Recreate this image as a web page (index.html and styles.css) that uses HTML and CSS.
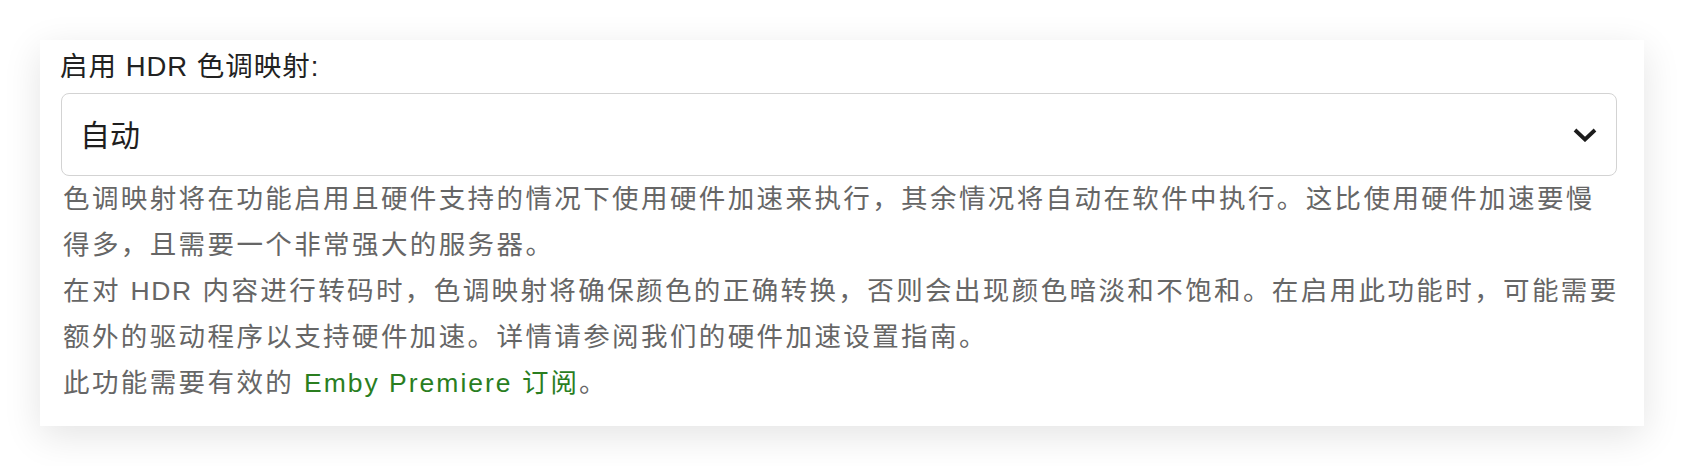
FILE: index.html
```html
<!DOCTYPE html>
<html lang="zh-CN">
<head>
<meta charset="utf-8">
<title>HDR 色调映射</title>
<link rel="stylesheet" href="styles.css">
</head>
<body>
<div class="card">
  <label class="field-label">启用 HDR 色调映射:</label>
  <div class="select">
    <span class="select-value">自动</span>
    <svg class="chevron" viewBox="0 0 24 14" width="24" height="14" aria-hidden="true"><polyline points="2,2 12,11.5 22,2"/></svg>
  </div>
  <div class="field-desc">
    <div>色调映射将在功能启用且硬件支持的情况下使用硬件加速来执行，其余情况将自动在软件中执行。这比使用硬件加速要慢<br>得多，且需要一个非常强大的服务器。</div>
    <div>在对 <span class="latin">HDR</span> 内容进行转码时，色调映射将确保颜色的正确转换，否则会出现颜色暗淡和不饱和。在启用此功能时，可能需要<br>额外的驱动程序以支持硬件加速。详情请参阅我们的硬件加速设置指南。</div>
    <div>此功能需要有效的 <a class="link" href="#">Emby Premiere 订阅</a>。</div>
  </div>
</div>
</body>
</html>
```

FILE: styles.css
```css
html, body {
  margin: 0;
  padding: 0;
  background: #ffffff;
}

body {
  padding: 40px;
  font-family: "Liberation Sans", "Noto Sans CJK SC", sans-serif;
}

.card {
  box-sizing: border-box;
  width: 1604px;
  background: #ffffff;
  padding: 10px 27px 20px 20px;
  box-shadow: 0 10px 36px rgba(0, 0, 0, 0.11);
}

.field-label {
  display: block;
  font-size: 27.5px;
  letter-spacing: 1px;
  line-height: 34px;
  color: #222222;
  margin-bottom: 9px;
}

.select {
  box-sizing: border-box;
  height: 83px;
  margin-left: 1px;
  border: 1.5px solid #d3d3d3;
  border-radius: 8px;
  padding: 0 19px 0 18px;
  display: flex;
  align-items: center;
  justify-content: space-between;
}

.select-value {
  font-size: 30px;
  color: #1e1e1e;
  line-height: 40px;
  padding-top: 2px;
}

.chevron {
  fill: none;
  stroke: #1c1c1c;
  stroke-width: 3.8;
  stroke-linejoin: miter;
  stroke-linecap: butt;
}

.field-desc {
  padding-left: 3px;
  font-size: 26.5px;
  letter-spacing: 2.4px;
  line-height: 46px;
  color: #666666;
  white-space: nowrap;
}

.latin {
  letter-spacing: 1.6px;
}

.link {
  color: #2a7e1f;
  text-decoration: none;
  letter-spacing: 2px;
}
```
